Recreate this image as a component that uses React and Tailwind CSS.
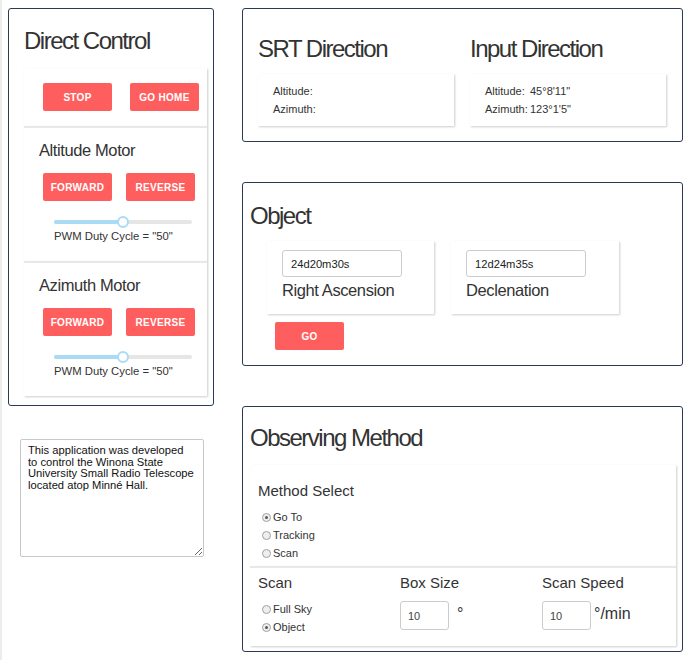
import React from "react";

const Btn = ({ children, className = "" }) => (
  <button
    className={`h-[28px] w-[69px] rounded-[2px] bg-[#ff5e5e] text-[10px] font-bold tracking-[0.3px] text-white ${className}`}
  >
    {children}
  </button>
);

const Slider = () => (
  <div className="relative h-[12px] w-[138px]">
    <div className="absolute left-0 right-0 top-[4px] h-[4px] rounded-full bg-[#e6e6e6]" />
    <div className="absolute left-0 top-[4px] h-[4px] w-[66px] rounded-full bg-[#a9dcf4]" />
    <div className="absolute left-[63px] top-0 h-[12px] w-[12px] rounded-full border-2 border-[#a9dcf4] bg-white" />
  </div>
);

const Radio = ({ checked, label }) => (
  <label className="flex h-[18px] items-center gap-[2px] text-[11px] text-[#333]">
    <span className="flex h-[9px] w-[9px] items-center justify-center rounded-full border border-[#a0a0a0] bg-[#efefef]">
      {checked && <span className="h-[3px] w-[3px] rounded-full bg-[#555]" />}
    </span>
    {label}
  </label>
);

const Title = ({ children }) => (
  <h2 className="text-[24px] leading-[26px] tracking-[-1.5px] text-[#333]">{children}</h2>
);

const card = "bg-white shadow-[1px_1px_2px_rgba(0,0,0,0.2)]";

// moteur : titre, boutons, pwm
const MotorCard = ({ title }) => (
  <div className={`h-[135px] border-t-2 border-[#e8e8e8] pl-[15px] pt-[13px] ${card}`}>
    <h3 className="text-[16.5px] leading-[18px] tracking-[-0.4px] text-[#333]">{title}</h3>
    <div className="mt-[14px] ml-[4px] flex gap-[14px]">
      <Btn>FORWARD</Btn>
      <Btn>REVERSE</Btn>
    </div>
    <div className="mt-[15px] ml-[15px]">
      <Slider />
    </div>
    <p className="mt-[2px] ml-[15px] text-[11.3px] leading-[13px] text-[#333]">
      PWM Duty Cycle = "50"
    </p>
  </div>
);

const DirCard = ({ title, alt, az }) => (
  <div className="w-[196px]">
    <Title>{title}</Title>
    <div className={`mt-[12px] h-[52px] pl-[15px] pt-[9px] ${card}`}>
      <div className="grid grid-cols-[45px_1fr] text-[11px] leading-[17.6px] text-[#333]">
        <span>Altitude:</span>
        <span>{alt}</span>
        <span>Azimuth:</span>
        <span>{az}</span>
      </div>
    </div>
  </div>
);

const CoordCard = ({ value, label, className = "" }) => (
  <div className={`h-[73px] w-[167px] pl-[15px] pt-[9px] ${card} ${className}`}>
    <input
      readOnly
      value={value}
      className="h-[27px] w-[120px] rounded-[3px] border border-[#cccccc] pl-[8px] text-[11.2px] text-[#222] outline-none"
    />
    <p className="mt-[4px] text-[16.5px] leading-[18px] tracking-[-0.4px] text-[#333]">{label}</p>
  </div>
);

export default function App() {
  return (
    <div className="flex min-h-[660px] border-l-2 border-[#ececec] bg-white pl-[6px] pt-[8px] font-['Liberation_Sans',Arial,sans-serif] text-[#333]">
      {/* colonne gauche */}
      <div className="flex w-[206px] flex-col">
        <div className="h-[398px] rounded-[3px] border border-[#2a3a55] pl-[15px] pr-[6px] pt-[19px]">
          <Title>Direct Control</Title>
          <div className="mt-[14px] w-[183px]">
            <div className={`flex h-[58px] items-center gap-[18px] pl-[19px] ${card}`}>
              <Btn>STOP</Btn>
              <Btn>GO HOME</Btn>
            </div>
            <MotorCard title="Altitude Motor" />
            <MotorCard title="Azimuth Motor" />
          </div>
        </div>

        <textarea
          className="ml-[12px] mt-[33px] h-[118px] w-[184px] overflow-hidden rounded-[2px] border border-[#c8c8c8] pl-[7px] pr-[3px] pt-[5px] text-[11.2px] leading-[11.7px] text-[#111] outline-none"
          defaultValue={
            "This application was developed\nto control the Winona State\nUniversity Small Radio Telescope\nlocated atop Minné Hall."
          }
        />
      </div>

      {/* colonne droite */}
      <div className="ml-[28px] flex w-[441px] flex-col">
        <div className="flex h-[134px] gap-[16px] rounded-[3px] border border-[#2a3a55] pl-[15px] pt-[27px]">
          <DirCard title="SRT Direction" alt="" az="" />
          <DirCard title="Input Direction" alt={"45°8'11\""} az={"123°1'5\""} />
        </div>

        <div className="mt-[40px] h-[184px] rounded-[3px] border border-[#2a3a55] pl-[7px] pt-[20px]">
          <Title>Object</Title>
          <div className="mt-[12px] ml-[17px] flex gap-[17px]">
            <CoordCard value="24d20m30s" label="Right Ascension" />
            <CoordCard value="12d24m35s" label="Declenation" className="w-[168px]" />
          </div>
          <Btn className="mt-[8px] ml-[25px] h-[27px]">GO</Btn>
        </div>

        <div className="mt-[40px] h-[246px] rounded-[3px] border border-[#2a3a55] pl-[7px] pt-[18px]">
          <Title>Observing Method</Title>
          <div className="mt-[14px] w-[426px]">
            <div className={`h-[101px] pl-[8px] pt-[17px] ${card}`}>
              <h4 className="text-[15px] leading-[18px] text-[#333]">Method Select</h4>
              <div className="mt-[8px] pl-[4px]">
                <Radio checked label="Go To" />
                <Radio label="Tracking" />
                <Radio label="Scan" />
              </div>
            </div>
            <div className={`grid h-[80px] grid-cols-3 border-t-2 border-[#e8e8e8] pt-[6px] ${card}`}>
              <div className="pl-[8px]">
                <h4 className="text-[15px] leading-[18px]">Scan</h4>
                <div className="mt-[8px] pl-[4px]">
                  <Radio label="Full Sky" />
                  <Radio checked label="Object" />
                </div>
              </div>
              <div className="pl-[8px]">
                <h4 className="text-[15px] leading-[18px]">Box Size</h4>
                <div className="mt-[9px] flex items-start gap-[8px]">
                  <input
                    readOnly
                    value="10"
                    className="h-[29px] w-[49px] rounded-[3px] border border-[#cccccc] pl-[7px] text-[11px] text-[#444] outline-none"
                  />
                  <span className="mt-[4px] text-[16px] leading-[18px]">°</span>
                </div>
              </div>
              <div className="pl-[8px]">
                <h4 className="text-[15px] leading-[18px]">Scan Speed</h4>
                <div className="mt-[9px] flex items-start gap-[3px]">
                  <input
                    readOnly
                    value="10"
                    className="h-[29px] w-[49px] rounded-[3px] border border-[#cccccc] pl-[7px] text-[11px] text-[#444] outline-none"
                  />
                  <span className="mt-[4px] text-[16px] leading-[18px]">°/min</span>
                </div>
              </div>
            </div>
          </div>
        </div>
      </div>
    </div>
  );
}
